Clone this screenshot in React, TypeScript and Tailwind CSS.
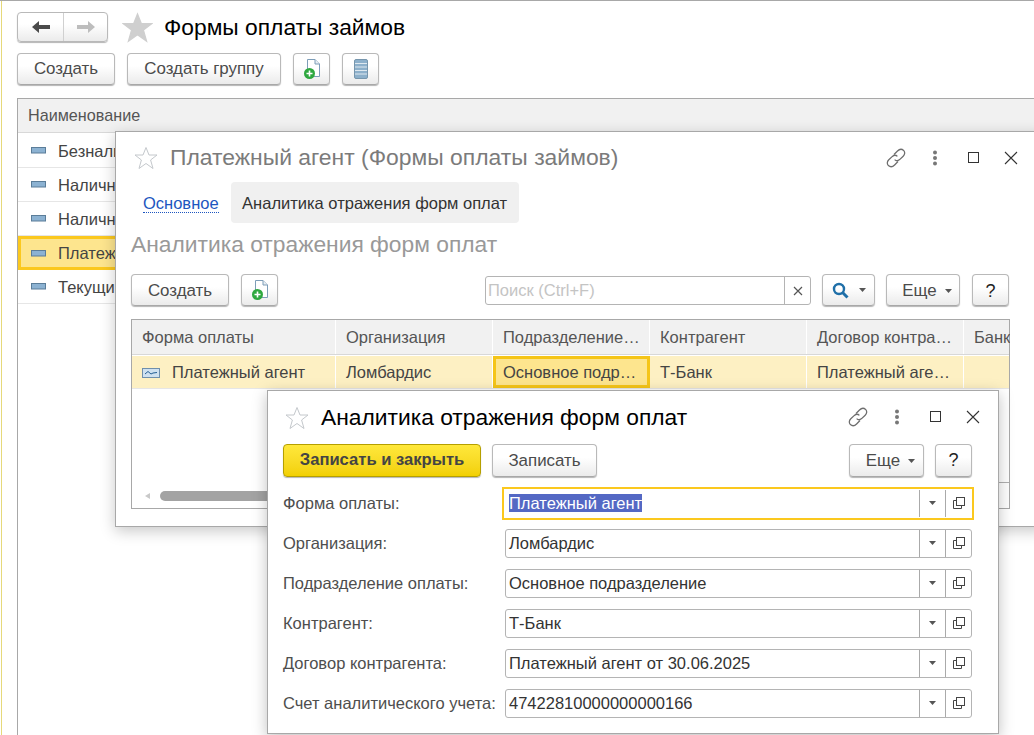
import React from "react";

function Btn({ className = "", children }: { className?: string; children?: React.ReactNode }) {
  return (
    <div className={"flex items-center justify-center rounded-[4px] border border-[#b9b9b9] border-b-[#a8a8a8] bg-gradient-to-b from-white from-40% to-[#ebebeb] text-[#4b4b4b] text-[16.9px] shadow-[0_1px_1px_#b5b5b5] " + className}>
      {children}
    </div>
  );
}

function Caret({ className = "" }: { className?: string }) {
  return (
    <svg width="7" height="4" viewBox="0 0 7 4" className={className}>
      <path d="M0 0H7L3.5 4Z" fill="#555" />
    </svg>
  );
}

function NewDocIcon() {
  return (
    <svg width="18" height="22" viewBox="0 0 18 22">
      <path d="M4.5 1.5H12L16.5 6V18.5H4.5Z" fill="#fff" stroke="#7d9db8" />
      <path d="M12 1.5V6H16.5" fill="#e8eef3" stroke="#7d9db8" />
      <circle cx="6.5" cy="15.5" r="5.5" fill="#2ea83f" />
      <path d="M6.5 12.5V18.5M3.5 15.5H9.5" stroke="#fff" strokeWidth="1.6" />
    </svg>
  );
}

function ListIcon() {
  return (
    <svg width="14" height="22" viewBox="0 0 14 22">
      <rect x="0.5" y="1.5" width="13" height="19" rx="1.5" fill="#8db0cb" stroke="#7796ad" />
      <path d="M1 5.5H13M1 9H13M1 12.5H13M1 16H13" stroke="#dfe9f0" strokeWidth="1" />
    </svg>
  );
}

function Star({ size, filled }: { size: number; filled?: boolean }) {
  return (
    <svg width={size} height={size} viewBox="0 0 24 24" className="shrink-0">
      <path
        d="M12 1.5L15 9H23L16.6 14L19 22.5L12 17.5L5 22.5L7.4 14L1 9H9Z"
        fill={filled ? "#cfcfcf" : "#fff"}
        stroke={filled ? "#cfcfcf" : "#c4c8cc"}
        strokeWidth="1"
      />
    </svg>
  );
}

function WindowControls() {
  return (
    <div className="flex items-center">
      <svg width="22" height="22" viewBox="0 0 22 22" fill="none" stroke="#6e6e6e" strokeWidth="1.3">
        <path d="M9 7.5L12.5 4C14.5 2 17 2 18.6 3.4C20.2 5 20 7.5 18.2 9.2L14.6 12.6C13 14 11 14 9.6 12.6" />
        <path d="M13 14.5L9.6 18C7.6 20 5 20 3.4 18.6C1.8 17 2 14.5 3.8 12.8L7.4 9.4C9 8 11 8 12.4 9.4" />
      </svg>
      <svg width="6" height="16" viewBox="0 0 6 16" className="ml-[25px]" fill="#777">
        <circle cx="3" cy="2.5" r="2" />
        <circle cx="3" cy="8" r="2" />
        <circle cx="3" cy="13.5" r="2" />
      </svg>
      <div className="ml-[30px] h-[11px] w-[11px] border border-[#333]" />
      <svg width="14" height="14" viewBox="0 0 14 14" className="ml-[25px]" stroke="#333" strokeWidth="1.1">
        <path d="M1 1L13 13M13 1L1 13" />
      </svg>
    </div>
  );
}

function SearchIcon() {
  return (
    <svg width="17" height="17" viewBox="0 0 17 17" fill="none" stroke="#1f6fa8" strokeWidth="2.4">
      <circle cx="7" cy="7" r="5" />
      <path d="M10.8 10.8L15.5 15.5" strokeWidth="3" />
    </svg>
  );
}

function RowIcon() {
  return (
    <svg width="15" height="7" viewBox="0 0 15 7" className="shrink-0">
      <rect x="0.5" y="0.5" width="14" height="5.5" fill="#8cb2d2" stroke="#5b7d99" />
    </svg>
  );
}

function Row({ label, selected }: { label: string; selected?: boolean }) {
  return (
    <div
      className={
        "flex h-[34px] items-center text-[16.5px] text-[#444] " +
        (selected ? "border-[3px] border-[#fbc81e] bg-[#fde58e] pl-[10px]" : "border-b border-[#e6e6e6] pl-[13px]")
      }
    >
      <RowIcon />
      <span className="ml-[12px] w-[57px] overflow-hidden whitespace-nowrap pt-[1px]">{label}</span>
    </div>
  );
}

function Cell({ children, w, header, focus }: { children?: React.ReactNode; w: number; header?: boolean; focus?: boolean }) {
  return (
    <div
      style={{ width: w }}
      className={
        "flex h-full shrink-0 items-center overflow-hidden whitespace-nowrap pt-[1px] text-[16.5px] " +
        (header ? "text-[#555] " : "text-[#444] ") +
        (focus ? "border-[3px] border-[#f5c518] bg-[#fde58e] pl-[7px]" : "border-r border-white pl-[10px]")
      }
    >
      {children}
    </div>
  );
}

function Field({ label, value, focus, selected }: { label: string; value: string; focus?: boolean; selected?: boolean }) {
  return (
    <div className="flex h-[40px] items-center">
      <div className="w-[222px] whitespace-nowrap pt-[1px] text-[16.5px] text-[#4e4e4e]">{label}</div>
      <div
        className={
          "flex items-center bg-white " +
          (focus
            ? "ml-[-3px] h-[33px] w-[472px] border-2 border-[#fbc81e] pr-[1px]"
            : "h-[29px] w-[467px] rounded-[3px] border border-[#b4b4b4]")
        }
      >
        <div className={"min-w-0 flex-1 pt-[1px] text-[16.5px] text-[#333] " + (focus ? "pl-[5px]" : "pl-[3px]")}>
          {selected ? <span className="bg-[#5468c4] text-white">{value}</span> : value}
        </div>
        <div className={"flex w-[26px] items-center justify-center border-l border-[#aaaaaa] " + (focus ? "h-[27px]" : "h-full")}>
          <Caret />
        </div>
        <div className={"flex w-[26px] items-center justify-center border-l border-[#aaaaaa] " + (focus ? "h-[27px]" : "h-full")}>
          <svg width="12" height="12" viewBox="0 0 12 12" fill="none" stroke="#444">
            <rect x="3.5" y="0.5" width="8" height="8" />
            <path d="M3.5 3.5H0.5V11.5H8.5V8.5" />
          </svg>
        </div>
      </div>
    </div>
  );
}

export default function App() {
  return (
    <div className="relative h-[735px] w-[1034px] overflow-hidden bg-white font-[Liberation_Sans,Arial,sans-serif]">
      {/* main page */}
      <div className="h-full border-t border-[#a8a8a8] pl-[17px]">
        <div className="absolute left-[1px] top-[1px] h-[734px] w-[1px] bg-[#e6d97a]" />
        <div className="mt-[11px] flex h-[30px] items-center">
          <div className="flex h-[30px] w-[91px] rounded-[4px] border border-[#b9b9b9] bg-gradient-to-b from-white from-40% to-[#ebebeb] shadow-[0_1px_1px_#b5b5b5]">
            <div className="flex w-[46px] items-center justify-center border-r border-[#d0d0d0]">
              <svg width="18" height="12" viewBox="0 0 18 12">
                <path d="M0 6L7 0V4H18V8H7V12Z" fill="#4b4b4b" />
              </svg>
            </div>
            <div className="flex flex-1 items-center justify-center">
              <svg width="18" height="12" viewBox="0 0 18 12">
                <path d="M18 6L11 0V4H0V8H11V12Z" fill="#bdbdbd" />
              </svg>
            </div>
          </div>
          <div className="ml-[14px]">
            <Star size={31} filled />
          </div>
          <div className="ml-[11px] text-[22.8px] text-black">Формы оплаты займов</div>
        </div>
        <div className="mt-[11px] flex h-[32px] gap-[12px]">
          <Btn className="w-[98px]">Создать</Btn>
          <Btn className="w-[154px]">Создать группу</Btn>
          <Btn className="w-[37px]"><NewDocIcon /></Btn>
          <Btn className="w-[37px]"><ListIcon /></Btn>
        </div>
        <div className="mt-[13px] h-[640px] border-l border-t border-[#a8a8a8]">
          <div className="flex h-[34px] items-center border-b border-[#d8d8d8] bg-[#f1f1f1] pl-[10px] text-[16.2px] text-[#555]">
            Наименование
          </div>
          <div className="mt-[1px]">
            <Row label="Безналичные" />
            <Row label="Наличные" />
            <Row label="Наличные" />
            <Row label="Платежный агент" selected />
            <Row label="Текущий счет" />
          </div>
        </div>
      </div>

      {/* second window */}
      <div className="absolute left-[115px] top-[131px] h-[396px] w-[930px] border border-[#a8a8a8] bg-white shadow-[0_4px_14px_rgba(0,0,0,0.22)]">
        <div className="flex h-[50px] items-center pl-[18px] pr-[26px] pt-[1px]">
          <Star size={24} />
          <div className="ml-[12px] flex-1 text-[22.9px] text-[#7b7b7b]">Платежный агент (Формы оплаты займов)</div>
          <WindowControls />
        </div>
        <div className="flex h-[41px] items-center pl-[27px]">
          <span className="border-b border-dotted border-[#1d56c0] pt-[2px] text-[16.5px] leading-[18px] text-[#1d56c0]">Основное</span>
          <div className="ml-[12px] flex h-[41px] w-[288px] items-center justify-center rounded-[4px] bg-[#f0f0f0] pt-[1px] text-[16.5px] text-[#333]">
            Аналитика отражения форм оплат
          </div>
        </div>
        <div className="mt-[8px] whitespace-nowrap pl-[15px] text-[22.8px] leading-[26px] text-[#999]">Аналитика отражения форм оплат</div>
        <div className="mt-[17px] flex h-[32px] items-center pl-[15px]">
          <Btn className="h-[32px] w-[98px] pt-[2px]">Создать</Btn>
          <Btn className="ml-[12px] h-[32px] w-[37px]"><NewDocIcon /></Btn>
          <div className="ml-[207px] mt-[1px] flex h-[29px] w-[326px] items-center rounded-[3px] border border-[#b4b4b4] bg-white">
            <div className="flex-1 pl-[2px] text-[16.5px] text-[#c4c4c4]">Поиск (Ctrl+F)</div>
            <div className="flex h-full w-[26px] items-center justify-center border-l border-[#b4b4b4]">
              <svg width="10" height="10" viewBox="0 0 10 10" stroke="#555" strokeWidth="1.2">
                <path d="M1 1L9 9M9 1L1 9" />
              </svg>
            </div>
          </div>
          <Btn className="ml-[11px] h-[32px] w-[53px] gap-[10px]"><SearchIcon /><Caret /></Btn>
          <Btn className="ml-[11px] h-[32px] w-[74px] gap-[8px] pl-[8px] pt-[2px]">Еще<Caret /></Btn>
          <Btn className="ml-[12px] h-[32px] w-[37px] pt-[2px] !text-[18px] !text-[#222]">?</Btn>
        </div>
        <div className="relative ml-[15px] mt-[13px] h-[190px] w-[879px] border border-[#a8a8a8]">
          <div className="flex h-[35px] border-b border-[#d8d8d8] bg-[#f1f1f1]">
            <Cell w={204} header>Форма оплаты</Cell>
            <Cell w={157} header>Организация</Cell>
            <Cell w={157} header>Подразделение…</Cell>
            <Cell w={157} header>Контрагент</Cell>
            <Cell w={157} header>Договор контра…</Cell>
            <Cell w={47} header>Банк</Cell>
          </div>
          <div className="mt-[1px] flex h-[33px] border-b border-[#e6e6e6] bg-[#fdf0c3]">
            <Cell w={204}>
              <svg width="18" height="10" viewBox="0 0 18 10" className="mr-[12px] shrink-0">
                <rect x="0.5" y="0.5" width="17" height="9" fill="#cfe1f0" stroke="#6f8fac" />
                <path d="M3 6L6 3.5L9 6L11 5L15 4.5" fill="none" stroke="#245f94" />
              </svg>
              Платежный агент
            </Cell>
            <Cell w={157}>Ломбардис</Cell>
            <Cell w={157} focus>Основное подр…</Cell>
            <Cell w={157}>Т-Банк</Cell>
            <Cell w={157}>Платежный аге…</Cell>
            <Cell w={47} />
          </div>
          <div className="absolute left-[13px] top-[171px] flex items-center">
            <svg width="5" height="6" viewBox="0 0 5 6"><path d="M0 3L5 0V6Z" fill="#c9c9c9" /></svg>
            <div className="ml-[10px] h-[10px] w-[700px] rounded-full bg-[#a3a3a3]" />
          </div>
          <div className="absolute bottom-0 right-0 flex h-[26px] w-[20px] items-center border-t border-[#b0b0b0] pl-[2px]">
            <svg width="6" height="6" viewBox="0 0 6 6"><path d="M0 0H6L3 6Z" fill="#c9c9c9" /></svg>
          </div>
        </div>
      </div>

      {/* third window */}
      <div className="absolute left-[267px] top-[390px] h-[344px] w-[732px] border border-[#a8a8a8] bg-white shadow-[0_4px_14px_rgba(0,0,0,0.25)]">
        <div className="flex h-[53px] items-center pl-[17px] pr-[18px]">
          <Star size={24} />
          <div className="ml-[12px] flex-1 text-[22.8px] text-black">Аналитика отражения форм оплат</div>
          <div className="mb-[2px]"><WindowControls /></div>
        </div>
        <div className="flex h-[33px] items-center pl-[15px] pr-[26px]">
          <div className="flex h-[33px] w-[198px] items-center justify-center rounded-[4px] border border-[#b59f00] bg-gradient-to-b from-[#ffe83a] to-[#f2d000] text-[16.6px] font-bold text-[#444] shadow-[0_1px_1px_#b5b5b5]">
            Записать и закрыть
          </div>
          <Btn className="ml-[11px] h-[33px] w-[105px] pt-[1px]">Записать</Btn>
          <div className="flex-1" />
          <Btn className="h-[33px] w-[75px] gap-[8px] pl-[8px]">Еще<Caret /></Btn>
          <Btn className="ml-[11px] h-[33px] w-[37px] !text-[18px] !text-[#222]">?</Btn>
        </div>
        <div className="mt-[6px] pl-[15px]">
          <Field label="Форма оплаты:" value="Платежный агент" focus selected />
          <Field label="Организация:" value="Ломбардис" />
          <Field label="Подразделение оплаты:" value="Основное подразделение" />
          <Field label="Контрагент:" value="Т-Банк" />
          <Field label="Договор контрагента:" value="Платежный агент от 30.06.2025" />
          <Field label="Счет аналитического учета:" value="47422810000000000166" />
        </div>
      </div>
    </div>
  );
}
